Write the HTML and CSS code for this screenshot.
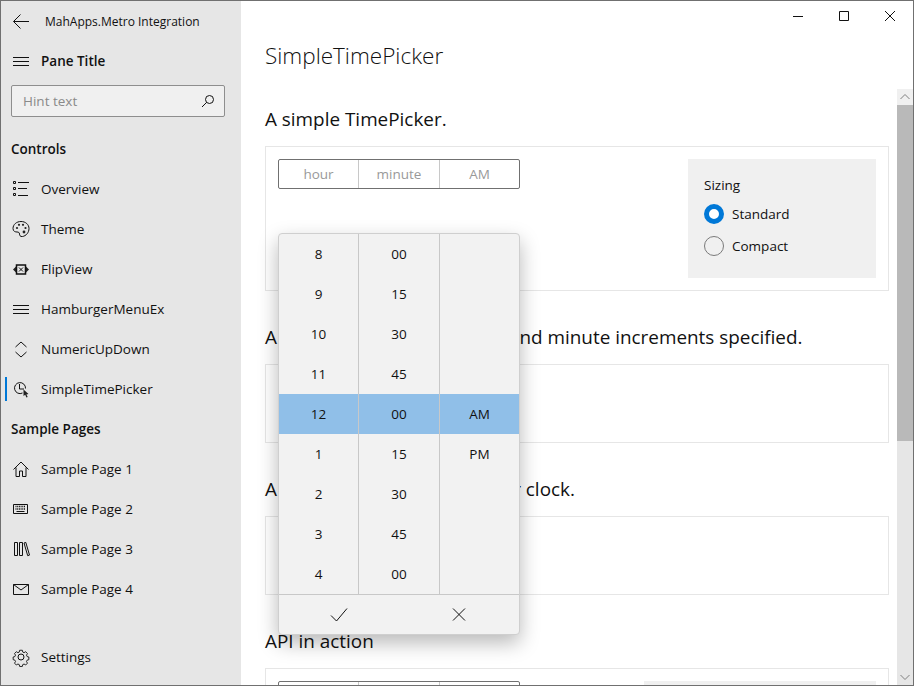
FILE: index.html
```html
<!DOCTYPE html>
<html lang="en">
<head>
  <meta charset="UTF-8" />
  <title>SimpleTimePicker</title>
  <link rel="stylesheet" href="styles.css">
</head>
<body>
  <div class="window">
    <aside class="sidebar">
      <div class="row app-title">
        <svg class="icon" viewBox="0 0 20 20"><path d="M18 10.500H2.700M9.500 3.500l-7 7 7 7"/></svg>
        <span>MahApps.Metro Integration</span>
      </div>
      <div class="row pane-title">
        <svg class="icon" viewBox="0 0 20 20"><path d="M2 6.500h16M2 10.500h16M2 14.500h16"/></svg>
        <span>Pane Title</span>
      </div>
      <div class="search-wrap">
        <div class="search">
          <span>Hint text</span>
          <svg class="search-icon" viewBox="0 0 14 14"><circle cx="8.500" cy="5.500" r="4"/><path d="M5.700 8.300L1 13"/></svg>
        </div>
      </div>
      <div class="row group">Controls</div>
      <div class="row">
        <svg class="icon" viewBox="0 0 20 20"><path d="M2.500 2.500h2v2h-2zM2.500 8.500h2v2h-2zM2.500 14.500h2v2h-2zM7 3.500h11M7 9.500h9M7 16.500h10"/></svg>
        <span>Overview</span>
      </div>
      <div class="row">
        <svg class="icon" viewBox="0 0 20 20"><path d="M10 2.500c-4.500 0-8 3-8 7 0 3 2.500 3.500 4 3.500 1.500 0 2.500.5 2.500 2 0 1 .5 3 3 2.500 3.500-.5 6.500-4 6.500-8 0-4-3.500-7-8-7z"/><circle class="dot" cx="6" cy="9" r="1.100"/><circle class="dot" cx="8" cy="5.800" r="1.100"/><circle class="dot" cx="12" cy="5.800" r="1.100"/><circle class="dot" cx="14.500" cy="9" r="1.100"/><circle class="dot" cx="13" cy="13" r="1.400"/></svg>
        <span>Theme</span>
      </div>
      <div class="row">
        <svg class="icon" viewBox="0 0 20 20"><path class="fill" d="M2 10.500l3-3v6zM18 10.500l-3-3v6z"/><path class="thick" d="M5.500 6h9v9h-9z"/><path d="M8 8.500l4 4M12 8.500l-4 4"/></svg>
        <span>FlipView</span>
      </div>
      <div class="row">
        <svg class="icon" viewBox="0 0 20 20"><path d="M2 6.500h16M2 10.500h16M2 14.500h16"/></svg>
        <span>HamburgerMenuEx</span>
      </div>
      <div class="row">
        <svg class="icon" viewBox="0 0 20 20"><path d="M4.500 8L10 3l5.500 5M4.500 13l5.500 5 5.500-5"/></svg>
        <span>NumericUpDown</span>
      </div>
      <div class="row active">
        <svg class="icon" viewBox="0 0 20 20"><path d="M11.500 14a5.500 5.500 0 1 1 3-4.500M8.500 5v5h4.500"/><path class="fill" d="M12.500 10.500l5 4.500-2.100.4 1.300 2.600-1.300.5-1.200-2.700-1.700 1.300z"/></svg>
        <span>SimpleTimePicker</span>
      </div>
      <div class="row group">Sample Pages</div>
      <div class="row">
        <svg class="icon" viewBox="0 0 20 20"><path d="M2.500 10.500L10 3l7.500 7.500M5 8.500v9h3.500V12h3v5.500H15v-9"/></svg>
        <span>Sample Page 1</span>
      </div>
      <div class="row">
        <svg class="icon" viewBox="0 0 20 20"><path d="M2.500 5.500h14v9h-14zM5.500 12.500h8"/><path class="keys" d="M4.500 7.500h10M4.500 10h10"/></svg>
        <span>Sample Page 2</span>
      </div>
      <div class="row">
        <svg class="icon" viewBox="0 0 20 20"><path d="M3.500 3.500h3v13h-3zM8.500 3.500h3v13h-3zM13 4l1.800-.6 3.700 12.700-1.800.6z"/></svg>
        <span>Sample Page 3</span>
      </div>
      <div class="row">
        <svg class="icon" viewBox="0 0 20 20"><path d="M2.500 5.500h15v10h-15zM2.500 5.500L10 11l7.500-5.500"/></svg>
        <span>Sample Page 4</span>
      </div>
      <div class="row settings">
        <svg class="icon" viewBox="0 0 20 20"><circle cx="10" cy="10" r="3"/><path d="M8.500 2.500h3l.4 2 1.500.7 1.800-1.100 2 2.100-1.100 1.700.7 1.600 1.900.5v3l-1.900.5-.7 1.600 1.100 1.700-2 2.100-1.800-1.100-1.500.7-.4 2h-3l-.4-2-1.500-.7-1.800 1.100-2-2.100 1.100-1.700-.7-1.600-1.900-.5v-3l1.900-.5.7-1.600-1.100-1.700 2-2.100 1.800 1.100 1.500-.7z" transform="translate(1 1) scale(.9)"/></svg>
        <span>Settings</span>
      </div>
    </aside>

    <main class="main">
      <div class="caption">
        <svg class="caption-btn" viewBox="0 0 46 30"><path d="M18 15.500h10"/></svg>
        <svg class="caption-btn" viewBox="0 0 46 30"><path d="M18.500 10.500h9v9h-9z"/></svg>
        <svg class="caption-btn" viewBox="0 0 46 30"><path d="M18 10l10 10M28 10L18 20"/></svg>
      </div>
      <h1 class="page-title">SimpleTimePicker</h1>

      <div class="scroller">
        <div class="content">
          <section class="section">
            <h2>A simple TimePicker.</h2>
            <div class="card card-split">
              <div class="picker">
                <span>hour</span><span>minute</span><span>AM</span>
              </div>
              <div class="options">
                <div class="options-label">Sizing</div>
                <div class="radio checked"><i></i>Standard</div>
                <div class="radio"><i></i>Compact</div>
              </div>
            </div>
          </section>

          <section class="section">
            <h2>A TimePicker with a header and minute increments specified.</h2>
            <div class="card card-short"></div>
          </section>

          <section class="section">
            <h2>A TimePicker using a 24-hour clock.</h2>
            <div class="card card-short"></div>
          </section>

          <section class="section">
            <h2>API in action</h2>
            <div class="card card-split">
              <div class="picker">
                <span></span><span></span><span></span>
              </div>
              <div class="options options-wide"></div>
            </div>
          </section>
        </div>

        <div class="scrollbar">
          <div class="sb-btn">
            <svg viewBox="0 0 16 16"><path d="M3.500 10L8 5.500l4.500 4.500"/></svg>
          </div>
          <div class="sb-thumb"></div>
          <div class="sb-track"></div>
          <div class="sb-btn sb-btn-down">
            <svg viewBox="0 0 16 16"><path d="M3.500 6L8 10.500 12.500 6"/></svg>
          </div>
        </div>
      </div>
    </main>

    <div class="popup">
      <div class="popup-cols">
        <div class="col">
          <div>8</div><div>9</div><div>10</div><div>11</div><div class="sel">12</div><div>1</div><div>2</div><div>3</div><div>4</div>
        </div>
        <div class="col">
          <div>00</div><div>15</div><div>30</div><div>45</div><div class="sel">00</div><div>15</div><div>30</div><div>45</div><div>00</div>
        </div>
        <div class="col">
          <div></div><div></div><div></div><div></div><div class="sel">AM</div><div>PM</div><div></div><div></div><div></div>
        </div>
      </div>
      <div class="popup-foot">
        <svg viewBox="0 0 20 20"><path d="M2 10.500l5.500 5.500L18 3.500"/></svg>
        <svg viewBox="0 0 20 20"><path d="M4 3.500l12 12M16 3.500l-12 12"/></svg>
      </div>
    </div>
  </div>
</body>
</html>
```

FILE: styles.css
```css
* { box-sizing: border-box; }
body {
  margin: 0;
  font-family: "Open Sans", "Noto Sans", sans-serif;
  font-size: 13.500px;
  color: #111;
  background: #fff;
}
svg path, svg circle {
  fill: none;
  stroke: #111;
  stroke-width: 1;
}
svg .fill, svg .dot { fill: #222; stroke: none; }
svg .thick { stroke-width: 1.500; }
svg .keys { stroke-width: 1.500; stroke-dasharray: 1 .7; }

.window {
  position: relative;
  display: flex;
  width: 914px;
  height: 686px;
  border: 1px solid #707070;
  overflow: hidden;
}

/* left pane */
.sidebar {
  display: flex;
  flex-direction: column;
  flex: 0 0 240px;
  padding-bottom: 8px;
  background: #e6e6e6;
}
.row {
  position: relative;
  display: flex;
  align-items: center;
  flex: 0 0 40px;
  padding-left: 10px;
}
.icon { flex: 0 0 20px; width: 20px; height: 20px; margin-right: 10px; }
.app-title { font-size: 12px; }
.app-title .icon { margin-right: 14px; }
.pane-title, .group { font-weight: 600; }
.search-wrap { flex: 0 0 48px; padding: 4px 16px 0 10px; }
.search {
  display: flex;
  align-items: center;
  justify-content: space-between;
  height: 32px;
  padding: 0 9px 0 11px;
  background: #f0f0f0;
  border: 1px solid #8e8e8e;
  border-radius: 2px;
  color: #8a8a8a;
}
.search-icon { width: 14px; height: 14px; }
.active::before {
  content: "";
  position: absolute;
  left: 4px;
  top: 8px;
  width: 2px;
  height: 24px;
  background: #0078d7;
}
.settings { margin-top: auto; }

/* right side */
.main {
  display: flex;
  flex-direction: column;
  flex: 1;
  min-width: 0;
}
.caption { display: flex; justify-content: flex-end; flex: 0 0 30px; }
.caption-btn { width: 46px; height: 30px; }
.page-title {
  flex: 0 0 58px;
  margin: 0;
  padding: 9px 0 0 24px;
  font-size: 22.500px;
  font-weight: 300;
  line-height: 32px;
}
.scroller { display: flex; flex: 1; min-height: 0; }
.content { flex: 1; min-width: 0; overflow: hidden; padding: 17px 8px 0 24px; }
.section { margin-bottom: 33px; }
.section h2 {
  margin: 0 0 14px;
  height: 26px;
  font-size: 18.900px;
  font-weight: 400;
  line-height: 26px;
  white-space: nowrap;
}
.card { border: 1px solid #e6e6e6; padding: 12px; }
.card-split { display: flex; justify-content: space-between; }
.card-short { height: 79px; }

.picker {
  display: grid;
  grid-template-columns: 80px 81px 79px;
  width: 242px;
  height: 30px;
  border: 1px solid #707070;
  border-radius: 2px;
  color: #999;
}
.picker span {
  display: flex;
  align-items: center;
  justify-content: center;
  border-right: 1px solid #c8c8c8;
}
.picker span:last-child { border-right: none; }

.options {
  width: 188px;
  height: 119px;
  padding: 16px;
  background: #f0f0f0;
}
.options-wide { width: 232px; }
.options-label { height: 20px; line-height: 20px; margin-bottom: 9px; }
.radio { display: flex; align-items: center; height: 20px; margin-bottom: 12px; }
.radio i {
  width: 20px;
  height: 20px;
  margin-right: 8px;
  border: 1px solid #7a7a7a;
  border-radius: 50%;
}
.radio.checked i { border: 5.500px solid #0078d7; background: #fff; }

.scrollbar { display: flex; flex-direction: column; flex: 0 0 16px; background: #e6e6e6; }
.sb-btn { flex: 0 0 16px; background: #f0f0f0; }
.sb-btn-down { background: #e6e6e6; }
.sb-btn svg { display: block; width: 16px; height: 16px; }
.sb-btn svg path { stroke: #808080; }
.sb-thumb { flex: 0 0 336px; background: #b9b9b9; }
.sb-track { flex: 1; }

/* time flyout */
.popup {
  position: absolute;
  left: 277px;
  top: 232px;
  width: 242px;
  height: 402px;
  background: #f2f2f2;
  border: 1px solid #cfcfcf;
  border-radius: 4px;
  box-shadow: 0 8px 20px rgba(0, 0, 0, .28);
}
.popup-cols {
  display: grid;
  grid-template-columns: 80px 81px 79px;
  border-bottom: 1px solid #c8c8c8;
}
.col { border-right: 1px solid #c8c8c8; }
.col:last-child { border-right: none; }
.col div {
  display: flex;
  align-items: center;
  justify-content: center;
  height: 40px;
}
.col .sel { background: #90bfe8; }
.popup-foot {
  display: grid;
  grid-template-columns: 1fr 1fr;
  justify-items: center;
  align-items: center;
  height: 39px;
}
.popup-foot svg { width: 20px; height: 20px; }
```
